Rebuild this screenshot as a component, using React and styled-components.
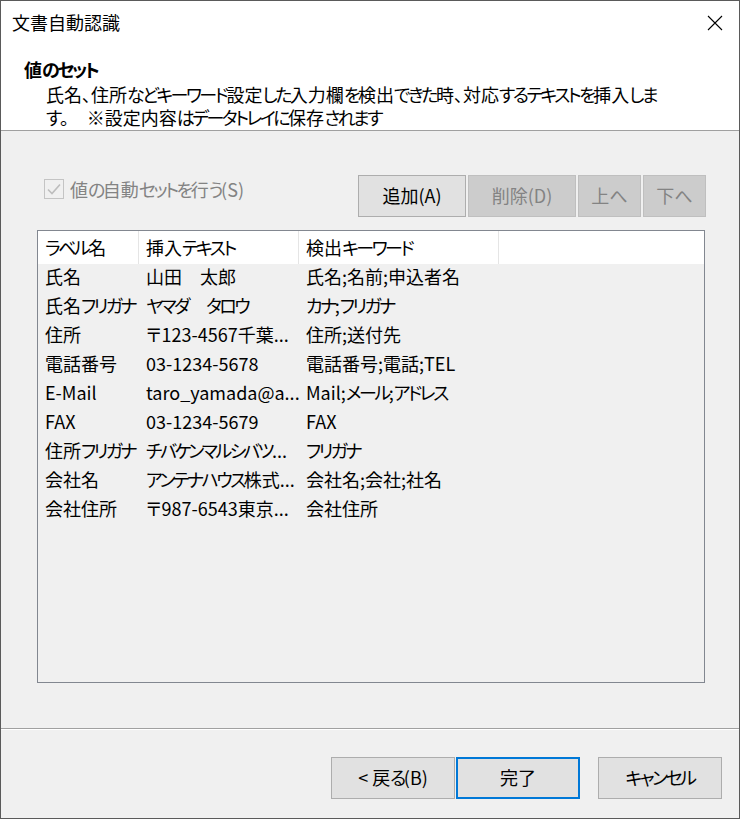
import React from "react";
import styled, { createGlobalStyle, css } from "styled-components";

const GlobalStyle = createGlobalStyle`
  html, body {
    margin: 0;
    padding: 0;
    background: #ffffff;
  }
  body {
    font-family: "Noto Sans CJK JP", "Noto Sans", sans-serif;
    font-feature-settings: "palt";
  }
`;

// Yu Gothic UI sets kana narrower than Noto; tighten kana runs only
const Kana = styled.span`
  letter-spacing: -2.5px;
`;

const KANA_SPLIT = /([\u3041-\u30ff]+)/;
const KANA_ONLY = /^[\u3041-\u30ff]+$/;

const Jp = ({ text }) =>
  text
    .split(KANA_SPLIT)
    .map((part, i) => (KANA_ONLY.test(part) ? <Kana key={i}>{part}</Kana> : part));

const Window = styled.div`
  width: 740px;
  height: 819px;
  box-sizing: border-box;
  border: 1px solid #5a5a5a;
  background: #ffffff;
  display: flex;
  flex-direction: column;
  color: #000;
  font-size: 18px;
`;

const TitleBar = styled.div`
  height: 43px;
  display: flex;
  align-items: center;
  justify-content: space-between;
  padding: 0 16px 0 11px;
`;

const Title = styled.span`
  font-size: 18px;
  line-height: 23px;
`;

const Header = styled.div`
  padding: 14px 0 1px 23px;
  border-bottom: 1px solid #a0a0a0;
`;

const HeaderTitle = styled.div`
  font-weight: 700;
  line-height: 23px;
`;

const HeaderText = styled.div`
  margin-top: 2px;
  padding-left: 22px;
  line-height: 23px;
`;

const Body = styled.div`
  flex: 1;
  background: #f0f0f0;
  padding: 44px 33px 0 36px;
  display: flex;
  flex-direction: column;
`;

const Toolbar = styled.div`
  display: flex;
  justify-content: space-between;
  align-items: flex-start;
  padding-left: 7px;
`;

const CheckRow = styled.label`
  margin-top: 2px;
  height: 24px;
  display: flex;
  align-items: center;
  gap: 6px;
  color: #838383;
`;

const CheckBox = styled.span`
  width: 18px;
  height: 18px;
  border: 1px solid #c4c4c4;
  display: flex;
  align-items: center;
  justify-content: center;
`;

const ButtonGroup = styled.div`
  display: flex;
  gap: 2px;
`;

const Button = styled.button`
  box-sizing: border-box;
  width: ${({ w }) => w}px;
  height: 42px;
  margin: 0;
  padding: 0 0 2px;
  font: inherit;
  font-size: 18px;
  color: #000;
  background: #e1e1e1;
  border: 1px solid #adadad;
  ${({ disabled }) =>
    disabled &&
    css`
      color: #838383;
      background: #cccccc;
      border-color: #bfbfbf;
    `}
  ${({ primary }) =>
    primary &&
    css`
      border: 2px solid #0078d7;
    `}
`;

const ListView = styled.div`
  margin-top: 13px;
  margin-right: 1px;
  height: 453px;
  box-sizing: border-box;
  border: 1px solid #828790;
  background: #f0f0f0;
`;

const Columns = "101px 160px 200px 1fr";

const ListHeader = styled.div`
  display: grid;
  grid-template-columns: ${Columns};
  height: 33px;
  background: #ffffff;
`;

const HeaderCell = styled.div`
  padding: 0 0 2px 7px;
  display: flex;
  align-items: center;
  border-right: ${({ last }) => (last ? "none" : "1px solid #e5e5e5")};
`;

const Row = styled.div`
  display: grid;
  grid-template-columns: ${Columns};
  height: 29px;
  box-sizing: border-box;
  padding-bottom: 5px;
  align-items: center;
`;

const Cell = styled.div`
  padding-left: 7px;
  white-space: nowrap;
  overflow: hidden;
`;

const Footer = styled.div`
  height: 90px;
  border-top: 1px solid #a0a0a0;
  box-shadow: inset 0 1px 0 #ffffff;
  background: #f0f0f0;
  box-sizing: border-box;
  padding: 28px 17px 0 0;
  display: flex;
  justify-content: flex-end;
`;

const NavGroup = styled.div`
  display: flex;
  gap: 1px;
  margin-right: 18px;
`;

const rows = [
  ["氏名", "山田　太郎", "氏名;名前;申込者名"],
  ["氏名フリガナ", "ヤマダ　タロウ", "カナ;フリガナ"],
  ["住所", "〒123-4567千葉...", "住所;送付先"],
  ["電話番号", "03-1234-5678", "電話番号;電話;TEL"],
  ["E-Mail", "taro_yamada@a...", "Mail;メール;アドレス"],
  ["FAX", "03-1234-5679", "FAX"],
  ["住所フリガナ", "チバケンマルシバツ...", "フリガナ"],
  ["会社名", "アンテナハウス株式...", "会社名;会社;社名"],
  ["会社住所", "〒987-6543東京...", "会社住所"],
];

const CloseIcon = () => (
  <svg width="16" height="16" viewBox="0 0 16 16">
    <path d="M1 1L15 15M15 1L1 15" stroke="#000" strokeWidth="1.1" fill="none" />
  </svg>
);

const CheckMark = () => (
  <svg width="16" height="16" viewBox="0 0 16 16">
    <path d="M2 8.5L6 12.5L14 3.5" stroke="#bdbdbd" strokeWidth="1.6" fill="none" />
  </svg>
);

export default function App() {
  return (
    <>
      <GlobalStyle />
      <Window>
        <TitleBar>
          <Title>文書自動認識</Title>
          <CloseIcon />
        </TitleBar>
        <Header>
          <HeaderTitle>
            <Jp text="値のセット" />
          </HeaderTitle>
          <HeaderText>
            <Jp text="氏名、住所などキーワード設定した入力欄を検出できた時、対応するテキストを挿入しま" />
            <br />
            <Jp text="す。　※設定内容はデータトレイに保存されます" />
          </HeaderText>
        </Header>
        <Body>
          <Toolbar>
            <CheckRow>
              <CheckBox>
                <CheckMark />
              </CheckBox>
              <span>
                <Jp text="値の自動セットを行う(S)" />
              </span>
            </CheckRow>
            <ButtonGroup>
              <Button w={108}>追加(A)</Button>
              <Button w={108} disabled>削除(D)</Button>
              <Button w={63} disabled>上へ</Button>
              <Button w={63} disabled>下へ</Button>
            </ButtonGroup>
          </Toolbar>
          <ListView>
            <ListHeader>
              <HeaderCell>
                <Jp text="ラベル名" />
              </HeaderCell>
              <HeaderCell>
                <Jp text="挿入テキスト" />
              </HeaderCell>
              <HeaderCell>
                <Jp text="検出キーワード" />
              </HeaderCell>
              <HeaderCell last />
            </ListHeader>
            {rows.map(([label, text, keys]) => (
              <Row key={label}>
                <Cell>
                  <Jp text={label} />
                </Cell>
                <Cell>
                  <Jp text={text} />
                </Cell>
                <Cell>
                  <Jp text={keys} />
                </Cell>
                <Cell />
              </Row>
            ))}
          </ListView>
        </Body>
        <Footer>
          <NavGroup>
            <Button w={124}>
              &lt; <Jp text="戻る(B)" />
            </Button>
            <Button w={124} primary>
              完了
            </Button>
          </NavGroup>
          <Button w={124}>
            <Jp text="キャンセル" />
          </Button>
        </Footer>
      </Window>
    </>
  );
}
